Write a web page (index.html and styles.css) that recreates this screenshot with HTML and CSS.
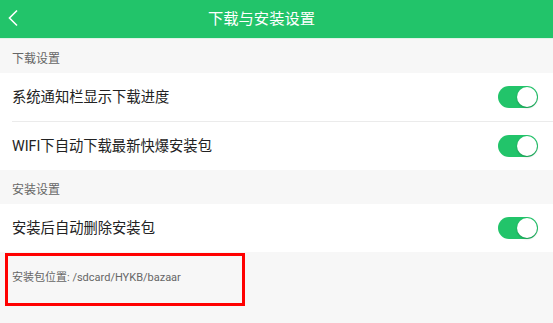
FILE: index.html
```html
<!DOCTYPE html>
<html lang="zh-CN">
<head>
<meta charset="utf-8">
<title>下载与安装设置</title>
<link rel="stylesheet" href="styles.css">
</head>
<body>
<div class="page">
  <header class="topbar">
    <svg class="back" width="12" height="18" viewBox="0 0 12 18"><path d="M10 1.5 L2.5 9 L10 16.5" fill="none" stroke="#fff" stroke-width="1.6"/></svg>
    <h1 class="title">下载与安装设置</h1>
  </header>
  <div class="section-label">下载设置</div>
  <div class="group">
    <div class="row">
      <span class="row-text">系统通知栏显示下载进度</span>
      <span class="toggle on"><span class="knob"></span></span>
    </div>
    <div class="divider"></div>
    <div class="row">
      <span class="row-text">WIFI下自动下载最新快爆安装包</span>
      <span class="toggle on"><span class="knob"></span></span>
    </div>
  </div>
  <div class="section-label">安装设置</div>
  <div class="group">
    <div class="row">
      <span class="row-text">安装后自动删除安装包</span>
      <span class="toggle on"><span class="knob"></span></span>
    </div>
  </div>
  <div class="footer">
    <span class="path">安装包位置: /sdcard/HYKB/bazaar</span>
    <div class="highlight"></div>
  </div>
</div>
</body>
</html>
```

FILE: styles.css
```css
* { box-sizing: border-box; margin: 0; padding: 0; }
html, body { width: 553px; height: 323px; overflow: hidden; }
body {
  background: #f7f7f7;
  font-family: Roboto, "Noto Sans CJK SC", sans-serif;
}
.page { display: flex; flex-direction: column; }
.topbar {
  height: 39px;
  background: #22c46a;
  display: flex;
  align-items: center;
  justify-content: center;
  padding: 0 30px 1px 0;
  position: relative;
  border-bottom: 1px solid #dff3e7;
}
.back { position: absolute; left: 7px; top: 9px; }
.title {
  color: #fff;
  font-size: 15.3px;
  font-weight: normal;
  line-height: 20px;
}
.section-label {
  height: 34px;
  padding: 12px 0 0 12px;
  font-size: 12px;
  line-height: 16px;
  color: #666;
}
.group { background: #fff; }
.row {
  height: 48px;
  display: flex;
  align-items: center;
  justify-content: space-between;
  padding: 0 15px 0 12px;
}
.divider {
  height: 1px;
  margin-left: 12px;
  background: #ebebeb;
}
.row-text { font-size: 14.3px; color: #222; line-height: 20px; }
.toggle {
  width: 40px; height: 22px;
  border-radius: 11px;
  background: #22c46a;
  position: relative;
  display: block;
}
.knob {
  position: absolute;
  right: 1px; top: 1px;
  width: 20px; height: 20px;
  border-radius: 50%;
  background: #fff;
  box-shadow: 0 1px 2px rgba(0,0,0,0.25);
}
.footer {
  position: relative;
  padding: 14px 0 0 12px;
  height: 71px;
}
.path { font-size: 11px; line-height: 16px; color: #666; }
.highlight {
  position: absolute;
  left: 5px; top: 1px;
  width: 240px; height: 53px;
  border: 3px solid #ff0000;
}
```
